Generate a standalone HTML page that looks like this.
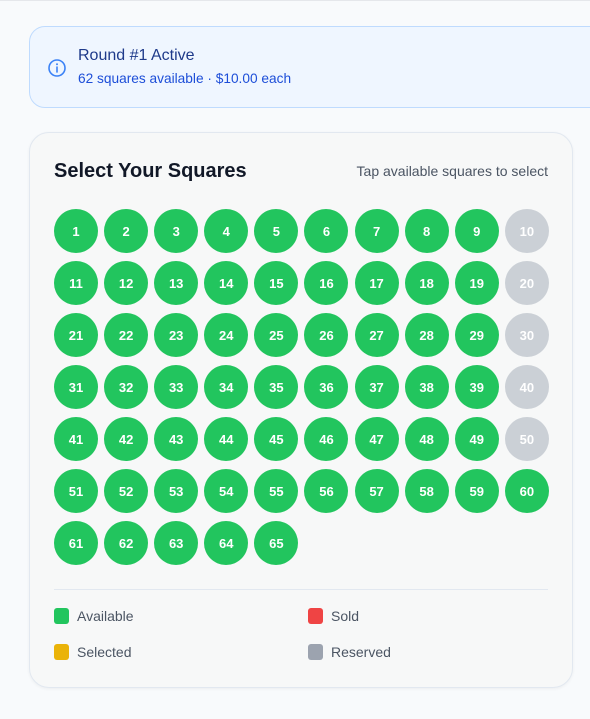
<!DOCTYPE html>
<html><head><style>
*{box-sizing:border-box;margin:0;padding:0}
body{width:590px;height:719px;background:#f8fafc;font-family:"Liberation Sans",sans-serif;position:relative;overflow:hidden}
.top{position:absolute;left:0;top:0;width:590px;height:1px;background:#e5e7eb}
.banner{position:absolute;left:29px;top:26px;width:600px;height:82px;background:#eff6ff;border:1px solid #bfdbfe;border-radius:16px}
.banner svg{position:absolute;left:17px;top:31px}
.t1{position:absolute;left:48px;top:20px;font-size:16px;color:#1e3a8a}
.t2{position:absolute;left:48px;top:44px;font-size:13.7px;color:#1d4ed8}
.card{position:absolute;left:29px;top:132px;width:544px;height:556px;background:#f7f8f8;border:1px solid #e2e8f0;border-radius:20px;box-shadow:0 1px 3px rgba(0,0,0,.05)}
h2{position:absolute;left:24px;top:27px;font-size:20px;font-weight:bold;color:#111827}
.hint{position:absolute;right:24px;top:30px;font-size:14px;color:#4b5563}
.grid{position:absolute;left:24px;top:76px;width:495px;display:grid;grid-template-columns:repeat(10,44px);column-gap:6.1px;row-gap:8px}
.c{width:44px;height:44px;border-radius:50%;background:#22c55e;color:#fff;font-weight:bold;font-size:13px;display:flex;align-items:center;justify-content:center}
.g{background:#cbd0d6}
.hr{position:absolute;left:24px;top:456px;width:494px;height:1px;background:#e2e8f0}
.lg{position:absolute;font-size:14px;color:#4b5563;display:flex;align-items:center}
.lg i{display:inline-block;width:15px;height:16px;border-radius:3px;margin-right:8px}
</style></head><body>
<div class="top"></div>
<div class="banner">
<svg width="20" height="20" viewBox="0 0 20 20"><circle cx="10" cy="10" r="8" fill="none" stroke="#3b82f6" stroke-width="1.6"/><line x1="10" y1="9" x2="10" y2="14" stroke="#3b82f6" stroke-width="1.6" stroke-linecap="round"/><circle cx="10" cy="6.2" r="1" fill="#3b82f6"/></svg>
<div class="t1">Round #1 Active</div>
<div class="t2">62 squares available · $10.00 each</div>
</div>
<div class="card">
<h2>Select Your Squares</h2>
<div class="hint">Tap available squares to select</div>
<div class="grid">
<div class="c">1</div><div class="c">2</div><div class="c">3</div><div class="c">4</div><div class="c">5</div><div class="c">6</div><div class="c">7</div><div class="c">8</div><div class="c">9</div><div class="c g">10</div>
<div class="c">11</div><div class="c">12</div><div class="c">13</div><div class="c">14</div><div class="c">15</div><div class="c">16</div><div class="c">17</div><div class="c">18</div><div class="c">19</div><div class="c g">20</div>
<div class="c">21</div><div class="c">22</div><div class="c">23</div><div class="c">24</div><div class="c">25</div><div class="c">26</div><div class="c">27</div><div class="c">28</div><div class="c">29</div><div class="c g">30</div>
<div class="c">31</div><div class="c">32</div><div class="c">33</div><div class="c">34</div><div class="c">35</div><div class="c">36</div><div class="c">37</div><div class="c">38</div><div class="c">39</div><div class="c g">40</div>
<div class="c">41</div><div class="c">42</div><div class="c">43</div><div class="c">44</div><div class="c">45</div><div class="c">46</div><div class="c">47</div><div class="c">48</div><div class="c">49</div><div class="c g">50</div>
<div class="c">51</div><div class="c">52</div><div class="c">53</div><div class="c">54</div><div class="c">55</div><div class="c">56</div><div class="c">57</div><div class="c">58</div><div class="c">59</div><div class="c">60</div>
<div class="c">61</div><div class="c">62</div><div class="c">63</div><div class="c">64</div><div class="c">65</div>
</div>
<div class="hr"></div>
<div class="lg" style="left:24px;top:475px"><i style="background:#22c55e"></i>Available</div>
<div class="lg" style="left:278px;top:475px"><i style="background:#ef4444"></i>Sold</div>
<div class="lg" style="left:24px;top:511px"><i style="background:#eab308"></i>Selected</div>
<div class="lg" style="left:278px;top:511px"><i style="background:#9ca3af"></i>Reserved</div>
</div>
</body></html>
